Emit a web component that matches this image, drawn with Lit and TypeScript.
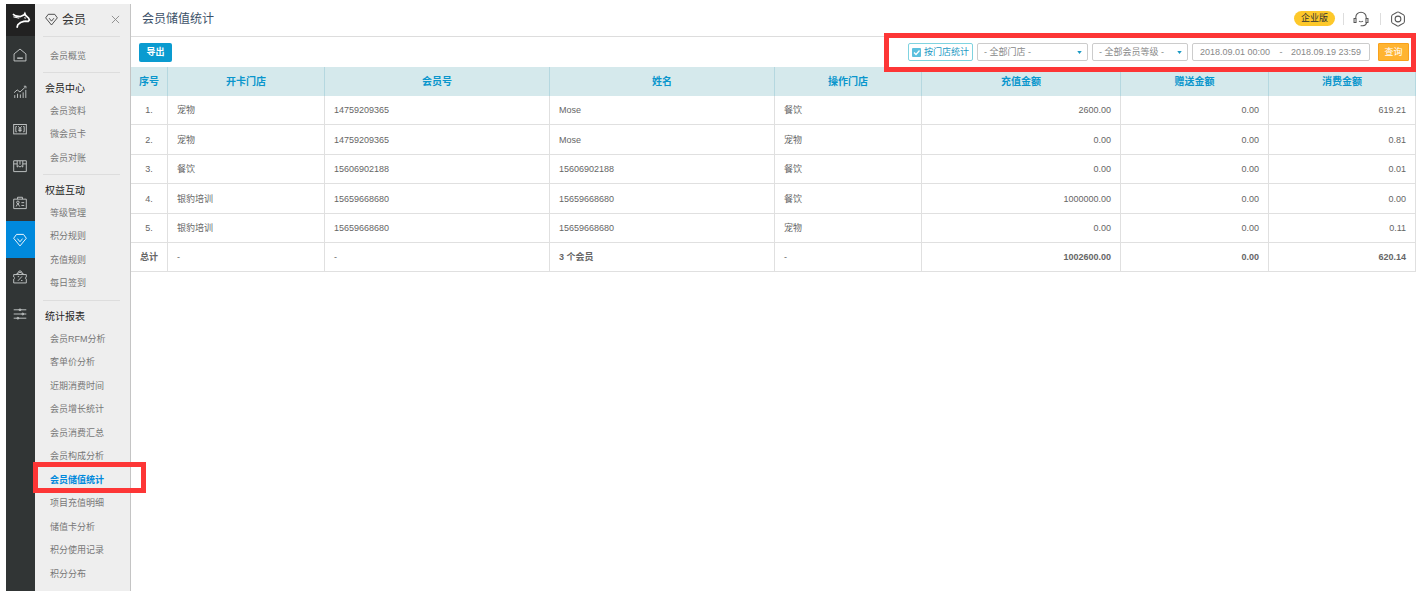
import { LitElement, html, svg, css, nothing } from "lit";
import { customElement, property, state } from "lit/decorators.js";
import { classMap } from "lit/directives/class-map.js";

const icons: Record<string, unknown> = {
  logo: svg`<path d="M1 3.500 4 5.500l5 .8 4.500-2 .8-1.500.9 2.200 3.300 3L19.300 10l-1.300 1.500-4-.3M14 11.200l-4.500 1.600-3 2.400L5.500 18.500" stroke-width="1.900"/><path d="M1.500 6.500 8 8M13.500 7.500l2 .5" stroke-width="1.100"/>`,
  home: svg`<path d="M1.500 8.500 10 1.500l8.500 7V18.500h-17z"/><path d="M6 14.500h8" stroke-width="2"/>`,
  chart: svg`<path d="M2.500 18.500v-4M6.500 18.500v-6M10.500 18.500v-5M14.500 18.500v-8M18.300 18.500V7M1.500 11 6 7l4 3 7-6.500M15.500 1.800h3v3"/>`,
  money: svg`<rect x="1" y="3.500" width="18" height="13.500"/><path d="M5.500 6.500h-1.500v7.500h1.500M14.500 6.500H16v7.500h-1.500M7.500 6 10 9l2.500-3M10 9v5.500M7.500 10h5M7.500 12.300h5"/>`,
  box: svg`<path d="M1 2.500h18v15.500H1zM1 7h5M14 7h5M6 2.500v9l2-1.500 2 1.500 2-1.500 2 1.500v-9M10 2.500V8"/>`,
  badge: svg`<path d="M1 4.500h18V18H1zM6.500 4.500V1.800h7v2.700M4.500 15l2.500-4.500L9.500 15M12 9.500h4M12 13.500h4"/><circle cx="7" cy="9" r="1.800"/>`,
  diamond: svg`<path d="M5 2h10l4 5.500L10 18.500 1 7.500zM6.300 8 10 12.500 13.700 8"/>`,
  coupon: svg`<path d="M1 6.500h18v3.500l-1.500 1.500L19 13v5.500H1V13l1.500-1.500L1 10zM4 6.500 10 3l6 3.500M6.500 3.500 10 1l3.500 2.500M7 15.500l6-6.500M6.800 9.500h2M11.500 15h2"/>`,
  sliders: svg`<path d="M1 4h18M1 10h18M1 16h18"/><circle cx="10" cy="4" r="1.300"/><circle cx="14" cy="10" r="1.300"/><circle cx="7" cy="16" r="1.300"/>`,
  close: svg`<path d="M2 2l16 16M18 2 2 18" stroke-width="2"/>`,
  headset: svg`<path d="M3.500 9.500V8a6.500 6.500 0 0 1 13 0v1.500M1.300 9.500h2.500v5H1.300zM16.200 9.500h2.500v5h-2.500zM17 14.500c-.5 2.500-2 3.800-4.500 4M7.500 12.500c1.300 1.300 3.700 1.300 5 0M9.500 18.500h3"/>`,
  gear: svg`<path d="M8.300 1.800a3 3 0 0 1 3.400 0l5.300 3a3 3 0 0 1 1 2v6.400a3 3 0 0 1-1 2l-5.300 3a3 3 0 0 1-3.400 0l-5.300-3a3 3 0 0 1-1-2V6.800a3 3 0 0 1 1-2z"/><circle cx="10" cy="10" r="3.600"/>`,
};

@customElement("ui-icon")
export class UiIcon extends LitElement {
  @property() name = "";

  static styles = css`
    :host {
      display: inline-flex;
    }
    .glyph {
      width: 100%;
      height: 100%;
      fill: none;
      stroke: currentColor;
      stroke-width: 1.300;
    }
  `;

  render() {
    return html`<svg class="glyph" viewBox="0 0 20 20" aria-hidden="true">${icons[this.name] ?? nothing}</svg>`;
  }
}

interface Group {
  title: string;
  items: string[];
}

const groups: Group[] = [
  { title: "", items: ["会员概览"] },
  { title: "会员中心", items: ["会员资料", "微会员卡", "会员对账"] },
  { title: "权益互动", items: ["等级管理", "积分规则", "充值规则", "每日签到"] },
  {
    title: "统计报表",
    items: [
      "会员RFM分析",
      "客单价分析",
      "近期消费时间",
      "会员增长统计",
      "会员消费汇总",
      "会员构成分析",
      "会员储值统计",
      "项目充值明细",
      "储值卡分析",
      "积分使用记录",
      "积分分布",
    ],
  },
];

const rail: [string, string][] = [
  ["home", "首页"],
  ["chart", "统计"],
  ["money", "收银"],
  ["box", "商品"],
  ["badge", "员工"],
  ["diamond", "会员"],
  ["coupon", "营销"],
  ["sliders", "设置"],
];

const columns = ["序号", "开卡门店", "会员号", "姓名", "操作门店", "充值金额", "赠送金额", "消费金额"];

const rows = [
  ["1.", "宠物", "14759209365", "Mose", "餐饮", "2600.00", "0.00", "619.21"],
  ["2.", "宠物", "14759209365", "Mose", "宠物", "0.00", "0.00", "0.81"],
  ["3.", "餐饮", "15606902188", "15606902188", "餐饮", "0.00", "0.00", "0.01"],
  ["4.", "银豹培训", "15659668680", "15659668680", "餐饮", "1000000.00", "0.00", "0.00"],
  ["5.", "银豹培训", "15659668680", "15659668680", "宠物", "0.00", "0.00", "0.11"],
];

const totals = ["总计", "-", "-", "3 个会员", "-", "1002600.00", "0.00", "620.14"];

@customElement("app-root")
export class AppRoot extends LitElement {
  @state() private current = "会员储值统计";

  static styles = css`
    :host {
      display: block;
      box-sizing: border-box;
      min-height: 100vh;
      padding: 4px 8px 7px 6px;
      background: #fff;
      color: #666;
      font-family: "Liberation Sans", "Noto Sans CJK SC", sans-serif;
      font-size: 9px;
      line-height: 16px;
    }
    *,
    *::before {
      box-sizing: border-box;
    }
    .shell {
      display: flex;
      align-items: stretch;
    }
    a {
      color: inherit;
      text-decoration: none;
    }
    button,
    input,
    select {
      font: inherit;
      color: inherit;
      margin: 0;
    }
    ul {
      list-style: none;
      margin: 0;
      padding: 0;
    }

    .rail {
      flex: none;
      width: 29px;
      background: #313535;
      color: #c9cccc;
    }
    .brand {
      display: flex;
      align-items: center;
      justify-content: center;
      height: 32px;
      background: #222;
      color: #fff;
    }
    .brand ui-icon {
      width: 20px;
      height: 18px;
    }
    .rail-link {
      display: flex;
      align-items: center;
      justify-content: center;
      height: 37px;
      padding-right: 1px;
    }
    .rail-link ui-icon {
      width: 14px;
      height: 14px;
    }
    .rail-link.on {
      background: #0089dc;
      color: #fff;
    }

    .side {
      flex: none;
      width: 96px;
      padding: 0 10px 1px 8px;
      background: #eee;
      border-right: 1px solid #c4c4c4;
    }
    .side-head {
      display: flex;
      align-items: center;
      height: 33px;
      padding-left: 2px;
      padding-bottom: 1px;
      border-bottom: 1px solid #ddd;
      color: #333;
      font-size: 12px;
    }
    .side-head ui-icon {
      width: 13px;
      height: 13px;
      margin-right: 4px;
    }
    .side-name {
      flex: 1;
    }
    .close {
      display: flex;
      padding: 0;
      border: 0;
      background: none;
      color: #888;
    }
    .side-head .close ui-icon {
      width: 9px;
      height: 9px;
      margin: 0;
    }
    .group {
      padding: 4px 2px;
    }
    .group:first-of-type {
      padding-top: 8px;
    }
    .group + .group {
      border-top: 1px solid #ddd;
    }
    .group-title {
      margin: 0;
      font-size: 10px;
      font-weight: 400;
      line-height: 23px;
      color: #222;
    }
    .item {
      height: 23px;
      padding-left: 5px;
      line-height: 23px;
      color: #777;
      white-space: nowrap;
    }
    .item:nth-child(even) {
      height: 24px;
    }
    .item.on {
      position: relative;
      color: #0089dc;
      font-weight: 700;
    }
    .item.on::before {
      content: "";
      position: absolute;
      inset: -7px -28px -1px -12px;
      border: 5px solid #fd3636;
      pointer-events: none;
    }

    .main {
      flex: 1;
      min-width: 0;
    }
    .top {
      display: flex;
      align-items: center;
      height: 33px;
      padding: 0 10px 3px 11px;
      border-bottom: 1px solid #ddd;
    }
    .title {
      flex: 1;
      margin: 0;
      font-size: 12px;
      font-weight: 400;
      color: #3b5068;
    }
    .plan {
      height: 15px;
      padding: 0 7px;
      border-radius: 8px;
      background: #fdc82a;
      color: #333;
      line-height: 15px;
    }
    .tool {
      display: flex;
      align-items: center;
      height: 12px;
      padding: 0 0 0 9px;
      margin-left: 8px;
      border: 0;
      border-left: 1px solid #ddd;
      background: none;
      color: #555;
    }
    .tool + .tool {
      margin-left: 11px;
    }
    .tool ui-icon {
      flex: none;
      width: 16px;
      height: 16px;
    }

    .bar {
      position: relative;
      display: flex;
      align-items: center;
      justify-content: space-between;
      height: 30px;
      padding: 0 7px 0 8px;
    }
    .export {
      width: 33px;
      height: 19px;
      padding: 0;
      border: 0;
      border-radius: 2px;
      background: #0a9bd0;
      color: #fff;
      font-weight: 700;
    }
    .filters {
      display: flex;
      align-items: center;
      gap: 4px;
    }
    .filters::before {
      content: "";
      position: absolute;
      inset: -4px 0 -5px auto;
      width: 532px;
      border: 5px solid #fd3636;
      pointer-events: none;
      z-index: 1;
    }
    .check {
      display: flex;
      align-items: center;
      gap: 3px;
      height: 18px;
      padding: 0 3px;
      border: 1px solid #7fd3e0;
      border-radius: 2px;
      color: #2299c4;
    }
    .check-box {
      appearance: none;
      width: 9px;
      height: 9px;
      border-radius: 1px;
      background: #5bc0de
        url("data:image/svg+xml,%3Csvg xmlns='http://www.w3.org/2000/svg' viewBox='0 0 9 9'%3E%3Cpath d='M2 4.500l2 2 3.500-4' fill='none' stroke='white' stroke-width='1.300'/%3E%3C/svg%3E");
    }
    .pick {
      appearance: none;
      height: 18px;
      padding: 0 6px;
      border: 1px solid #ccc;
      border-radius: 2px;
      color: #888;
      background: #fff
        url("data:image/svg+xml,%3Csvg xmlns='http://www.w3.org/2000/svg' viewBox='0 0 6 4'%3E%3Cpath d='M0 0h6L3 4z' fill='%231b9ac4'/%3E%3C/svg%3E")
        no-repeat right 5px center / 5px 3px;
    }
    .pick.store {
      width: 111px;
    }
    .pick.level {
      width: 96px;
    }
    .range {
      display: flex;
      align-items: center;
      justify-content: space-between;
      width: 178px;
      height: 18px;
      padding: 0 7px;
      border: 1px solid #ccc;
      border-radius: 2px;
      color: #888;
    }
    .date {
      width: 71px;
      padding: 0;
      border: 0;
      outline: 0;
      background: none;
    }
    .query {
      width: 31px;
      height: 18px;
      margin-left: 4px;
      padding: 0;
      border: 1px solid #f9a11b;
      border-radius: 1px;
      background: #ffb431;
      color: #fff;
    }

    .data {
      width: 100%;
      table-layout: fixed;
      border-collapse: separate;
      border-spacing: 0;
    }
    .data th,
    .data td {
      height: 29px;
      padding: 0 9px;
      border-right: 1px solid #e0e0e0;
      border-bottom: 1px solid #e0e0e0;
      text-align: left;
    }
    .data thead th {
      background: #d5e9ec;
      border-right-color: #b5d8e0;
      border-bottom: 0;
      color: #0a96cc;
      font-size: 10px;
      text-align: center;
      padding: 0;
    }
    .data tbody tr:nth-child(even) td {
      height: 30px;
    }
    .data td:nth-child(n + 6) {
      text-align: right;
    }
    .data td:first-child {
      padding: 0;
      text-align: center;
    }
    .data .sum {
      font-weight: 700;
    }
    .w0 { width: 37px; }
    .w1 { width: 157px; }
    .w2 { width: 225px; }
    .w3 { width: 225px; }
    .w4 { width: 147px; }
    .w5 { width: 199px; }
    .w6 { width: 148px; }
    .w7 { width: 147px; }
  `;

  private open(e: Event, name: string) {
    e.preventDefault();
    this.current = name;
  }

  private renderGroup(g: Group) {
    return html`
      <section class="group">
        ${g.title ? html`<h2 class="group-title">${g.title}</h2>` : nothing}
        <ul>
          ${g.items.map(
            (name) => html`<li class=${classMap({ item: true, on: name === this.current })}>
              <a href="#" @click=${(e: Event) => this.open(e, name)}>${name}</a>
            </li>`
          )}
        </ul>
      </section>
    `;
  }

  render() {
    return html`
      <div class="shell">
        <nav class="rail">
          <a class="brand" href="#" aria-label="银豹"><ui-icon name="logo"></ui-icon></a>
          ${rail.map(
            ([icon, label]) => html`<a
              class=${classMap({ "rail-link": true, on: icon === "diamond" })}
              href="#"
              aria-label=${label}
              ><ui-icon name=${icon}></ui-icon
            ></a>`
          )}
        </nav>
        <aside class="side">
          <div class="side-head">
            <ui-icon name="diamond"></ui-icon>
            <span class="side-name">会员</span>
            <button class="close" aria-label="关闭"><ui-icon name="close"></ui-icon></button>
          </div>
          ${groups.map((g) => this.renderGroup(g))}
        </aside>
        <main class="main">
          <header class="top">
            <h1 class="title">会员储值统计</h1>
            <span class="plan">企业版</span>
            <button class="tool" aria-label="客服"><ui-icon name="headset"></ui-icon></button>
            <button class="tool" aria-label="设置"><ui-icon name="gear"></ui-icon></button>
          </header>
          <div class="bar">
            <button class="export">导出</button>
            <form class="filters" @submit=${(e: Event) => e.preventDefault()}>
              <label class="check"><input class="check-box" type="checkbox" checked />按门店统计</label>
              <select class="pick store" aria-label="门店">
                <option>- 全部门店 -</option>
              </select>
              <select class="pick level" aria-label="会员等级">
                <option>- 全部会员等级 -</option>
              </select>
              <div class="range">
                <input class="date" aria-label="开始时间" value="2018.09.01 00:00" />
                <span>-</span>
                <input class="date" aria-label="结束时间" value="2018.09.19 23:59" />
              </div>
              <button class="query">查询</button>
            </form>
          </div>
          <table class="data">
            <colgroup>
              ${columns.map((_, i) => html`<col class="w${i}" />`)}
            </colgroup>
            <thead>
              <tr>
                ${columns.map((c) => html`<th scope="col">${c}</th>`)}
              </tr>
            </thead>
            <tbody>
              ${rows.map((r) => html`<tr>${r.map((c) => html`<td>${c}</td>`)}</tr>`)}
            </tbody>
            <tfoot>
              <tr>
                ${totals.map((c) => html`<td class=${classMap({ sum: c !== "-" })}>${c}</td>`)}
              </tr>
            </tfoot>
          </table>
        </main>
      </div>
    `;
  }
}
